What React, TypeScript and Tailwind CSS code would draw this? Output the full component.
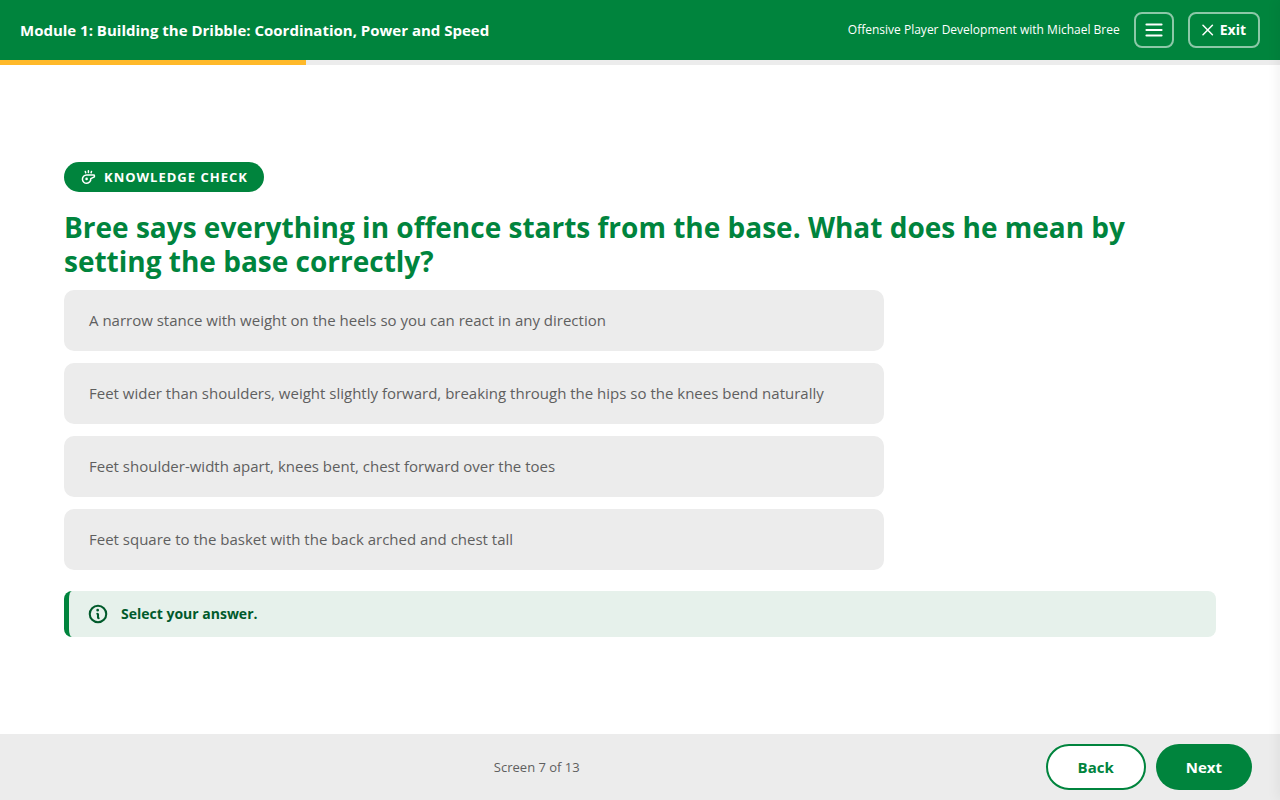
import { PiInfoBold, PiListBold } from 'react-icons/pi';

const options = [
  'A narrow stance with weight on the heels so you can react in any direction',
  'Feet wider than shoulders, weight slightly forward, breaking through the hips so the knees bend naturally',
  'Feet shoulder-width apart, knees bent, chest forward over the toes',
  'Feet square to the basket with the back arched and chest tall',
];

function WhistleIcon() {
  return (
    <svg
      width="16"
      height="16"
      viewBox="0 0 16 16"
      fill="none"
      stroke="currentColor"
      strokeWidth="1.5"
      strokeLinecap="round"
      strokeLinejoin="round"
      aria-hidden="true"
    >
      <path d="M6.6 5.9H13.8Q14.4 5.9 14.4 6.5V7.8L10.8 9.7A4.2 4.2 0 1 1 6.6 5.9Z" />
      <path d="M5.3 2.4L5.7 3.8M8.4 1.8V3.6M11.5 2.4L11.1 3.8" />
      <circle cx="6.6" cy="9.9" r="1.3" fill="currentColor" stroke="none" />
    </svg>
  );
}

function CloseIcon() {
  return (
    <svg
      width="12"
      height="12"
      viewBox="0 0 12 12"
      fill="none"
      stroke="currentColor"
      strokeWidth="1.5"
      strokeLinecap="round"
      aria-hidden="true"
    >
      <path d="M1 1.3L10.4 10.7M10.4 1.3L1 10.7" />
    </svg>
  );
}

function Header() {
  return (
    <header className="flex h-15 shrink-0 items-center justify-between bg-[#00843d] px-5 text-white">
      <h1 className="text-[15px] leading-[21px] font-bold">Module 1: Building the Dribble: Coordination, Power and Speed</h1>
      <div className="flex items-center gap-3.5">
        <span className="text-xs">Offensive Player Development with Michael Bree</span>
        <button
          type="button"
          aria-label="Menu"
          className="flex h-9 w-10 items-center justify-center rounded-lg border-2 border-white/55"
        >
          <PiListBold size={22} />
        </button>
        <button
          type="button"
          className="flex h-9 items-center gap-1.5 rounded-lg border-2 border-white/55 px-3 text-sm font-bold"
        >
          <CloseIcon />
          Exit
        </button>
      </div>
    </header>
  );
}

function Footer() {
  return (
    <footer className="flex shrink-0 items-center bg-[#ececec] px-7 py-2.5">
      <p className="flex-1 text-center text-[13px] leading-5 text-[#5f5f5f]">Screen 7 of 13</p>
      <div className="flex h-[46px] gap-2.5 text-[15px] font-bold">
        <button type="button" className="rounded-full border-2 border-[#00843d] bg-white px-[30px] text-[#00843d]">
          Back
        </button>
        <button type="button" className="rounded-full bg-[#00843d] px-[30px] text-white">
          Next
        </button>
      </div>
    </footer>
  );
}

export default function App() {
  return (
    <div className="relative flex min-h-screen flex-col overflow-hidden bg-white font-['Open_Sans',sans-serif]">
      <Header />
      <div className="h-[5px] shrink-0 bg-[#ececec]">
        <div className="h-full w-[23.9%] bg-[#ffb92a]" />
      </div>
      <main className="flex flex-1 flex-col justify-center px-16">
        <div className="flex h-[30px] items-center gap-2 self-start rounded-full bg-[#00843d] px-4 text-[13px] leading-5 font-bold tracking-[1px] text-white uppercase">
          <WhistleIcon />
          Knowledge Check
        </div>
        <h2 className="mt-[18px] text-[28px] leading-[34px] font-bold text-[#00843d]">
          Bree says everything in offence starts from the base. What does he mean by setting the base correctly?
        </h2>
        <div className="mt-3 flex max-w-[820px] flex-col gap-3">
          {options.map((option) => (
            <button
              key={option}
              type="button"
              className="rounded-[10px] bg-[#ececec] px-[25px] py-5 text-left text-[15px] leading-[21px] text-[#5f5f5f]"
            >
              {option}
            </button>
          ))}
        </div>
        <div
          role="status"
          className="mt-[21px] flex h-[46px] items-center gap-3 rounded-lg border-l-[5px] border-[#00843d] bg-[#e6f1eb] px-[18px] text-sm font-bold text-[#005a2b]"
        >
          <PiInfoBold size={22} />
          Select your answer.
        </div>
      </main>
      <Footer />
      <aside
        aria-hidden="true"
        className="pointer-events-none absolute inset-y-0 left-full w-80 bg-white shadow-[-2px_0_12px_rgba(0,0,0,0.06)]"
      />
    </div>
  );
}
